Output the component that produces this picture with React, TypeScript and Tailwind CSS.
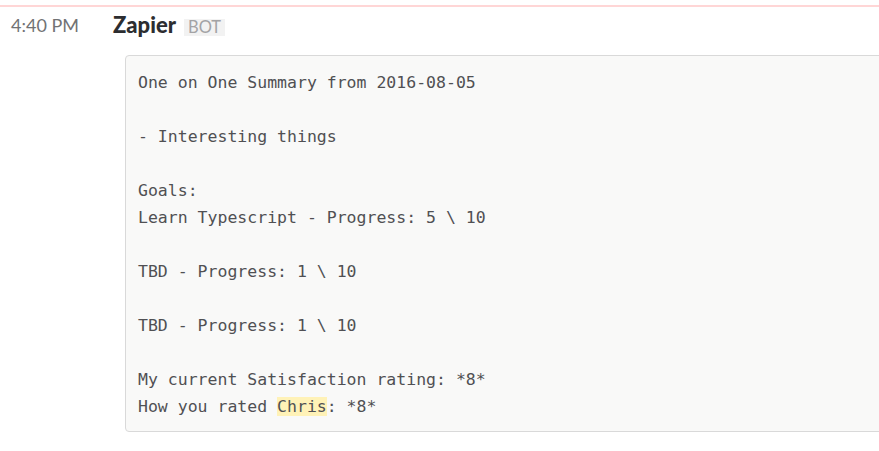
const lines: React.ReactNode[] = [
  'One on One Summary from 2016-08-05',
  '',
  '- Interesting things',
  '',
  'Goals:',
  'Learn Typescript - Progress: 5 \\ 10',
  '',
  'TBD - Progress: 1 \\ 10',
  '',
  'TBD - Progress: 1 \\ 10',
  '',
  'My current Satisfaction rating: *8*',
  <>
    How you rated <span className="bg-[#fff2b7]">Chris</span>: *8*
  </>,
];

export default function App() {
  return (
    <div className="w-[879px] h-[451px] overflow-hidden bg-white font-['Lato',sans-serif]">
      {/* new messages divider */}
      <div className="pt-[5px]">
        <div className="h-[2px] bg-[#ffd6d6]" />
      </div>

      <div className="flex pt-[4px]">
        {/* timestamp column */}
        <div className="w-[113px] shrink-0 pl-[11px] pt-[1px]">
          <span className="text-[18px] leading-[27px] text-[#717274]">4:40 PM</span>
        </div>

        <div className="flex-1 min-w-0">
          <div className="flex items-baseline gap-[8px] leading-[27px]">
            <span className="text-[22px] font-black text-[#2c2d30]">Zapier</span>
            <span className="bg-[#f2f2f2] px-[4px] text-[16.5px] leading-[17px] text-[#a3a3a5]">BOT</span>
          </div>

          <pre className="-mr-4 ml-[12px] mt-[17px] rounded-[4px] border border-[#d9d9d9] bg-[#f9f9f8] px-[12px] pt-[13px] pb-[11px] font-['DejaVu_Sans_Mono',monospace] text-[16.5px] leading-[27px] text-[#505053]">
            {lines.map((l, i) => (
              <div key={i} className="h-[27px] whitespace-pre">
                {l}
              </div>
            ))}
          </pre>
        </div>
      </div>
    </div>
  );
}
